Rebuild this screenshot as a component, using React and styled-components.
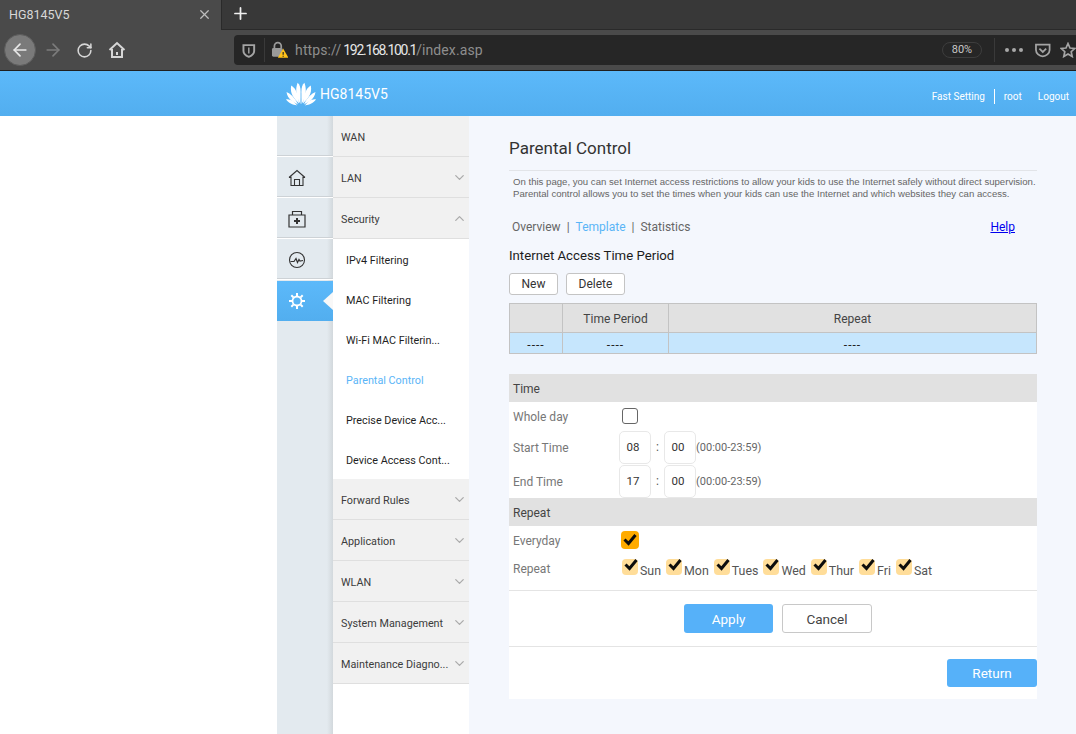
import styled, { createGlobalStyle } from "styled-components";
import { ArrowLeft, ArrowRight, ChevronDown, ChevronUp, Plus, RotateCw, X } from "lucide-react";

const FONT = 'Roboto, "Noto Sans", sans-serif';

const GlobalStyle = createGlobalStyle`
  html, body {
    margin: 0;
    padding: 0;
    background: #fff;
    overflow: hidden;
  }
  * {
    box-sizing: border-box;
  }
`;

const Page = styled.div`
  width: 1076px;
  height: 734px;
  overflow: hidden;
  font-family: ${FONT};
  display: flex;
  flex-direction: column;
`;

/* browser chrome */
const TabBar = styled.div`
  height: 30px;
  background: #383838;
  border-bottom: 1px solid #2a2a2a;
  display: flex;
  align-items: center;
  color: #fff;
`;

const Tab = styled.div`
  width: 222px;
  height: 30px;
  background: #4a4a4a;
  border-right: 1px solid #2a2a2a;
  padding: 0 9px;
  display: flex;
  align-items: center;
  justify-content: space-between;
  font-size: 12.5px;
  color: #d8d8d8;
`;

const NewTab = styled.div`
  margin: -2px 0 0 9px;
  display: flex;
`;

const NavBar = styled.div`
  height: 41px;
  background: #4a4a4a;
  border-bottom: 1px solid #1f1f1f;
  display: flex;
  align-items: center;
  padding-left: 4px;
`;

const BackCircle = styled.div`
  width: 32px;
  height: 32px;
  border-radius: 50%;
  background: #7a7a7a;
  border: 1px solid #5c5c5c;
  display: flex;
  align-items: center;
  justify-content: center;
`;

const NavIcon = styled.div`
  display: flex;
  margin-left: ${(p) => p.$left}px;
`;

const UrlBar = styled.div`
  flex: 1;
  height: 30px;
  margin-left: 108px;
  background: #262626;
  border-radius: 4px 0 0 4px;
  display: flex;
  align-items: center;
  padding-left: 8px;
  overflow: hidden;
`;

const UrlDivider = styled.div`
  width: 1px;
  height: 24px;
  background: #3a3a3a;
  margin: ${(p) => p.$margin};
`;

const UrlText = styled.div`
  margin-left: 7px;
  width: 664px;
  font-size: 14px;
  letter-spacing: 0.1px;
  color: #8e8e8e;
  white-space: nowrap;
  b {
    margin-left: 2px;
    font-weight: 400;
    letter-spacing: -1.3px;
    color: #e6e6e6;
  }
`;

const ZoomPill = styled.div`
  width: 42px;
  height: 16px;
  border: 1px solid #3d3d3d;
  border-radius: 8px;
  color: #c8c8c8;
  font-size: 11px;
  line-height: 14px;
  text-align: center;
`;

const Dots = styled.div`
  display: flex;
  gap: 3px;
  margin: 0 12px 0 10px;
  span {
    width: 4px;
    height: 4px;
    border-radius: 50%;
    background: #a8a8a8;
  }
`;

/* router header */
const Header = styled.header`
  height: 45px;
  background: linear-gradient(#5cb9fa, #52aeef);
  display: flex;
  padding-left: 286px;
  color: #fff;
`;

const Brand = styled.div`
  display: flex;
  align-items: center;
  gap: 4px;
  font-size: 14px;
  height: 45px;
`;

const HeaderLinks = styled.div`
  margin-left: auto;
  padding: 18px 7px 0 0;
  display: flex;
  align-items: flex-start;
  font-size: 10px;
  line-height: 15px;
`;

const HeaderLink = styled.span`
  margin-left: ${(p) => p.$left || 0}px;
  padding-right: ${(p) => p.$right || 0}px;
  border-right: ${(p) => (p.$bar ? "1px solid #fff" : "none")};
`;

/* page body */
const Body = styled.div`
  flex: 1;
  display: grid;
  grid-template-columns: 277px 56px 136px 1fr;
  min-height: 0;
`;

const Blank = styled.div`
  background: #fff;
`;

const IconRail = styled.nav`
  background: linear-gradient(to right, #e3eaef 0 50px, #d2d8dc 56px);
  display: flex;
  flex-direction: column;
`;

const RailItem = styled.div`
  position: relative;
  height: 41px;
  margin-bottom: ${(p) => (p.$gap ? 1 : 0)}px;
  padding: 2px 0 0 11px;
  display: flex;
  align-items: center;
  border-bottom: 1px solid #fff;
  box-shadow: inset 0 -1px 0 #cdd2d6;
  ${(p) =>
    p.$active &&
    `
    height: 40px;
    padding-top: 0;
    background: linear-gradient(#5cb9fa, #52aeef);
    box-shadow: none;
    border-bottom: none;
  `}
`;

const RailNotch = styled.div`
  position: absolute;
  right: 0;
  top: 11px;
  border-style: solid;
  border-width: 9px 10px 9px 0;
  border-color: transparent #f8f8f8 transparent transparent;
`;

const Menu = styled.nav`
  background: #fff;
  display: flex;
  flex-direction: column;
  font-size: 10.8px;
`;

const MenuItem = styled.div`
  height: 41px;
  background: #f1f1f1;
  border-bottom: 1px solid #dfdfdf;
  padding: 0 2px 0 8px;
  display: flex;
  align-items: center;
  justify-content: space-between;
  color: #3c3c3c;
  white-space: nowrap;
`;

const MenuLabel = styled.span`
  padding-top: 2px;
`;

const SubItem = styled.div`
  height: 40px;
  padding: 2px 0 0 13px;
  display: flex;
  align-items: center;
  color: ${(p) => (p.$active ? "#5ab5f7" : "#1f1f1f")};
  white-space: nowrap;
`;

const Content = styled.main`
  background: #f4f7fd;
  padding-left: 40px;
  overflow: hidden;
`;

const Column = styled.div`
  width: 528px;
`;

const Title = styled.h1`
  margin: 0;
  height: 55px;
  padding-top: 19px;
  border-bottom: 1px solid #e2e4e8;
  font-size: 17px;
  line-height: 26px;
  font-weight: 400;
  color: #333;
`;

const Description = styled.p`
  margin: 0;
  padding: 5px 0 0 4px;
  font-family: "Liberation Sans", Arial, sans-serif;
  font-size: 9.6px;
  line-height: 12px;
  color: #666;
  white-space: nowrap;
`;

const TabsRow = styled.div`
  display: flex;
  align-items: center;
  height: 20px;
  margin-top: 17px;
  padding-left: 3px;
  font-size: 12px;
  color: #666;
`;

const TabLink = styled.span`
  color: ${(p) => (p.$active ? "#5ab5f7" : "#666")};
`;

const TabBarSep = styled.span`
  margin: 0 6px;
`;

const HelpLink = styled.a`
  margin-left: auto;
  margin-right: 22px;
  color: #0000ee;
  text-decoration: underline;
  cursor: pointer;
`;

const SectionTitle = styled.h2`
  margin: 9px 0 0;
  height: 20px;
  font-size: 13.2px;
  line-height: 20px;
  font-weight: 400;
  color: #1c1c1c;
`;

const ButtonRow = styled.div`
  display: flex;
  gap: 8px;
  margin-top: 7px;
`;

const SmallButton = styled.button`
  height: 22px;
  width: ${(p) => p.$width}px;
  padding: 0;
  background: #fff;
  border: 1px solid #c4c4c4;
  border-radius: 3px;
  font-family: ${FONT};
  font-size: 12px;
  color: #333;
`;

const Table = styled.table`
  width: 528px;
  margin-top: 8px;
  border-collapse: collapse;
  table-layout: fixed;
  font-size: 12px;
  color: #444;
  th {
    height: 29px;
    padding: 2px 0 0;
    background: #e1e1e1;
    border: 1px solid #c3c3c3;
    font-weight: 400;
  }
  td {
    height: 21px;
    padding: 3px 0 0;
    background: #c6e6fd;
    border: 1px solid #c3c3c3;
    text-align: center;
    letter-spacing: 1px;
    color: #222;
  }
`;

const Card = styled.section`
  margin-top: 20px;
  background: #fff;
  font-size: 12px;
  color: #777;
`;

const Band = styled.div`
  height: 28px;
  padding: 2px 0 0 4px;
  background: #e1e1e1;
  display: flex;
  align-items: center;
  color: #444;
`;

const Row = styled.div`
  height: ${(p) => p.$height}px;
  margin-bottom: ${(p) => p.$bottom || 0}px;
  display: grid;
  grid-template-columns: 106px 1fr;
  align-items: center;
  padding-left: 4px;
`;

const RowLabel = styled.span`
  padding-top: 2px;
`;

const Controls = styled.div`
  display: flex;
  align-items: center;
`;

const TimeInput = styled.input`
  width: 32px;
  height: 33px;
  padding: 0 4px 0 0;
  background: #fff;
  border: 1px solid #e8e8e8;
  border-radius: 5px;
  outline: none;
  text-align: center;
  font-family: ${FONT};
  font-size: 11.5px;
  color: #333;
`;

const Colon = styled.span`
  width: 13px;
  text-align: center;
  color: #555;
`;

const Hint = styled.span`
  font-size: 11px;
  color: #666;
`;

const EmptyCheck = styled.span`
  display: block;
  width: 16px;
  height: 16px;
  margin-left: 3px;
  border: 1px solid #666;
  border-radius: 3px;
  background: #fff;
`;

const CheckBox = styled.span`
  position: relative;
  display: block;
  flex: none;
  width: ${(p) => (p.$strong ? 18 : 16)}px;
  height: ${(p) => (p.$strong ? 18 : 16)}px;
  margin-left: ${(p) => (p.$strong ? 2 : 0)}px;
  border-radius: 4px;
  background: ${(p) => (p.$strong ? "#ffab00" : "#ffdd99")};
  svg {
    position: absolute;
    left: 2px;
    top: ${(p) => (p.$strong ? 2 : -1)}px;
  }
`;

const DayList = styled.div`
  display: flex;
  margin-left: 3px;
  gap: 5px;
  padding-top: 1px;
`;

const Day = styled.div`
  display: flex;
  gap: 2px;
  align-items: flex-start;
  color: #555;
  font-size: 12.4px;
  line-height: 16px;
`;

const DayName = styled.span`
  padding-top: 4px;
`;

const ActionRow = styled.div`
  height: ${(p) => p.$height}px;
  display: flex;
  align-items: center;
  gap: 9px;
  padding-left: ${(p) => p.$left || 0}px;
  justify-content: ${(p) => (p.$end ? "flex-end" : "flex-start")};
  border-top: ${(p) => (p.$line ? "1px solid #e4e4e4" : "none")};
`;

const PrimaryButton = styled.button`
  width: ${(p) => p.$width}px;
  height: ${(p) => p.$tall}px;
  padding: 0;
  border: none;
  border-radius: 3px;
  background: #56b1f9;
  color: #fff;
  font-family: ${FONT};
  font-size: 13.5px;
`;

const CancelButton = styled.button`
  width: 90px;
  height: 29px;
  padding: 0;
  background: #fff;
  border: 1px solid #c8c8c8;
  border-radius: 3px;
  color: #444;
  font-family: ${FONT};
  font-size: 13.5px;
`;

const HuaweiLogo = () => {
  const petals = (
    <>
      <path d="M14.400 22C10.500 16 8.800 8 11.600.8c2 1.400 3 4.700 3 9 0 4.500-.1 8.700-.2 12.200z" />
      <path d="M13 21.500C8.500 17 3.500 12 5.200 3.500 8 5 10 8 11.300 12c1 3.200 1.500 6.500 1.700 9.500z" />
      <path d="M12 22.500C7.500 20 1.500 17.500.5 10c3.800 1.500 8 5 11.500 12.500z" />
      <path d="M11 23.500C6.500 22.500 2.500 21.500 0 17.300c4-.6 8 1.500 11 6.200z" />
    </>
  );
  return (
    <svg width="30" height="24" viewBox="0 0 30 24" fill="#fff">
      {petals}
      <g transform="matrix(-1 0 0 1 30 0)">{petals}</g>
    </svg>
  );
};

const HomeBrowserIcon = () => (
  <svg width="18" height="18" viewBox="0 0 18 18" fill="none" stroke="#d6d6d6" strokeWidth="2">
    <path d="M1.500 9 9 2l7.500 7" />
    <path d="M4 8v8h10V8" />
    <rect x="8" y="11" width="2" height="3" fill="#d6d6d6" stroke="none" />
  </svg>
);

const ShieldIcon = () => (
  <svg width="14" height="15" viewBox="0 0 14 15" fill="none" stroke="#a4a4a4" strokeWidth="2">
    <path d="M1.500 2h11v6c0 3-3 5-5.500 6C4.500 13 1.500 11 1.500 8z" />
    <path d="M7 4.500v6" strokeWidth="1.500" />
  </svg>
);

const LockWarnIcon = () => (
  <svg width="18" height="18" viewBox="0 0 18 18">
    <path d="M3.500 7V5a3.500 3.500 0 0 1 7 0v2" fill="none" stroke="#9a9a9a" strokeWidth="1.800" />
    <rect x="1" y="7" width="11" height="9" rx="1.500" fill="#9a9a9a" />
    <path d="M12.500 7.500 18 17H7z" fill="#ffc21a" />
    <path d="M12.500 11v3M12.500 15v1" stroke="#222" strokeWidth="1.200" />
  </svg>
);

const PocketIcon = () => (
  <svg width="16" height="15" viewBox="0 0 16 15" fill="none" stroke="#a4a4a4" strokeWidth="1.800">
    <path d="M1 1.500h14V7c0 3.500-3.500 6.500-7 6.500S1 10.500 1 7z" />
    <path d="M4.500 5.500 8 9l3.500-3.500" />
  </svg>
);

const StarIcon = () => (
  <svg width="16" height="16" viewBox="0 0 16 16" fill="none" stroke="#a4a4a4" strokeWidth="1.700">
    <path d="M8 1.500l2 4.500 4.800.5-3.600 3.200 1 4.800L8 12l-4.200 2.500 1-4.800L1.200 6.500 6 6z" />
  </svg>
);

const RailHome = () => (
  <svg width="18" height="18" viewBox="0 0 18 18" fill="none" stroke="#333" strokeWidth="1.100">
    <path d="M1 8.500 9 1.500l8 7" />
    <path d="M3 7.500v9h12v-9" />
    <path d="M6.500 16.500v-6h5v6" />
    <path d="M1 8.500h2M15 8.500h2" />
  </svg>
);

const RailCase = () => (
  <svg width="18" height="18" viewBox="0 0 18 18" fill="none" stroke="#333" strokeWidth="1.200">
    <path d="M1 5h16v12H1z" />
    <path d="M4.500 5V1.500h9V5" />
    <path d="M9 8v6M6 11h6" strokeWidth="2" />
  </svg>
);

const RailPulse = () => (
  <svg width="18" height="18" viewBox="0 0 18 18" fill="none" stroke="#333" strokeWidth="1.100">
    <circle cx="9" cy="9" r="7.500" />
    <path d="M2.500 10.500H6l2-3 1.500 4 1.500-3 1 1.500 3-.5" strokeWidth="1.200" />
  </svg>
);

const RailGear = () => (
  <svg width="18" height="18" viewBox="0 0 18 18" fill="none" stroke="#fff" strokeWidth="1.800">
    <circle cx="9" cy="9" r="4.500" />
    <path d="M9 1v3M9 14v3M1 9h3M14 9h3M3.300 3.300l2.100 2.100M12.600 12.600l2.100 2.100M3.300 14.700l2.100-2.100M12.600 5.400l2.100-2.100" strokeWidth="2" />
  </svg>
);

const Tick = () => (
  <svg width="14" height="13" viewBox="0 0 14 13" fill="none" stroke="#0d0d0d" strokeWidth="3">
    <path d="M1.500 6.500 5.500 10.500 12.500 2" />
  </svg>
);

const menuTop = [
  { name: "WAN" },
  { name: "LAN", chevron: "down" },
  { name: "Security", chevron: "up" },
];

const subItems = [
  "IPv4 Filtering",
  "MAC Filtering",
  "Wi-Fi MAC Filterin...",
  "Parental Control",
  "Precise Device Acc...",
  "Device Access Cont...",
];

const menuBottom = ["Forward Rules", "Application", "WLAN", "System Management", "Maintenance Diagno..."];

const days = ["Sun", "Mon", "Tues", "Wed", "Thur", "Fri", "Sat"];

const MenuRow = ({ name, chevron }) => (
  <MenuItem>
    <MenuLabel>{name}</MenuLabel>
    {chevron === "down" && <ChevronDown size={15} color="#aaa" strokeWidth={2} />}
    {chevron === "up" && <ChevronUp size={15} color="#aaa" strokeWidth={2} />}
  </MenuItem>
);

const App = () => {
  return (
    <Page>
      <GlobalStyle />
      <TabBar>
        <Tab>
          <span>HG8145V5</span>
          <X size={15} color="#bdbdbd" strokeWidth={2} />
        </Tab>
        <NewTab>
          <Plus size={19} color="#f0f0f0" strokeWidth={2.2} />
        </NewTab>
      </TabBar>
      <NavBar>
        <BackCircle>
          <ArrowLeft size={20} color="#e8e8e8" strokeWidth={2} />
        </BackCircle>
        <NavIcon $left={7}>
          <ArrowRight size={20} color="#7c7c7c" strokeWidth={2} />
        </NavIcon>
        <NavIcon $left={13}>
          <RotateCw size={17} color="#d6d6d6" strokeWidth={2.2} />
        </NavIcon>
        <NavIcon $left={15}>
          <HomeBrowserIcon />
        </NavIcon>
        <UrlBar>
          <ShieldIcon />
          <UrlDivider $margin="0 6px 0 8px" />
          <LockWarnIcon />
          <UrlText>
            https://<b>192.168.100.1</b>/index.asp
          </UrlText>
          <ZoomPill>80%</ZoomPill>
          <UrlDivider $margin="0 0 0 12px" />
          <Dots>
            <span />
            <span />
            <span />
          </Dots>
          <PocketIcon />
          <NavIcon $left={9}>
            <StarIcon />
          </NavIcon>
        </UrlBar>
      </NavBar>
      <Header>
        <Brand>
          <HuaweiLogo />
          <span>HG8145V5</span>
        </Brand>
        <HeaderLinks>
          <HeaderLink $bar $right={9}>Fast Setting</HeaderLink>
          <HeaderLink $left={9}>root</HeaderLink>
          <HeaderLink $left={16}>Logout</HeaderLink>
        </HeaderLinks>
      </Header>
      <Body>
        <Blank />
        <IconRail>
          <RailItem />
          <RailItem>
            <RailHome />
          </RailItem>
          <RailItem>
            <RailCase />
          </RailItem>
          <RailItem $gap>
            <RailPulse />
          </RailItem>
          <RailItem $active>
            <RailGear />
            <RailNotch />
          </RailItem>
        </IconRail>
        <Menu>
          {menuTop.map((item) => (
            <MenuRow key={item.name} name={item.name} chevron={item.chevron} />
          ))}
          <div>
            {subItems.map((name) => (
              <SubItem key={name} $active={name === "Parental Control"}>
                {name}
              </SubItem>
            ))}
          </div>
          {menuBottom.map((name) => (
            <MenuRow key={name} name={name} chevron="down" />
          ))}
        </Menu>
        <Content>
          <Column>
            <Title>Parental Control</Title>
            <Description>
              On this page, you can set Internet access restrictions to allow your kids to use the Internet safely without direct supervision.
              <br />
              Parental control allows you to set the times when your kids can use the Internet and which websites they can access.
            </Description>
            <TabsRow>
              <TabLink>Overview</TabLink>
              <TabBarSep>|</TabBarSep>
              <TabLink $active>Template</TabLink>
              <TabBarSep>|</TabBarSep>
              <TabLink>Statistics</TabLink>
              <HelpLink>Help</HelpLink>
            </TabsRow>
            <SectionTitle>Internet Access Time Period</SectionTitle>
            <ButtonRow>
              <SmallButton $width={49}>New</SmallButton>
              <SmallButton $width={59}>Delete</SmallButton>
            </ButtonRow>
            <Table>
              <colgroup>
                <col width="53" />
                <col width="106" />
                <col />
              </colgroup>
              <thead>
                <tr>
                  <th />
                  <th>Time Period</th>
                  <th>Repeat</th>
                </tr>
              </thead>
              <tbody>
                <tr>
                  <td>----</td>
                  <td>----</td>
                  <td>----</td>
                </tr>
              </tbody>
            </Table>
            <Card>
              <Band>Time</Band>
              <Row $height={28}>
                <RowLabel>Whole day</RowLabel>
                <Controls>
                  <EmptyCheck />
                </Controls>
              </Row>
              <Row $height={34}>
                <RowLabel>Start Time</RowLabel>
                <Controls>
                  <TimeInput readOnly value="08" />
                  <Colon>:</Colon>
                  <TimeInput readOnly value="00" />
                  <Hint>(00:00-23:59)</Hint>
                </Controls>
              </Row>
              <Row $height={34}>
                <RowLabel>End Time</RowLabel>
                <Controls>
                  <TimeInput readOnly value="17" />
                  <Colon>:</Colon>
                  <TimeInput readOnly value="00" />
                  <Hint>(00:00-23:59)</Hint>
                </Controls>
              </Row>
              <Band>Repeat</Band>
              <Row $height={28}>
                <RowLabel>Everyday</RowLabel>
                <Controls>
                  <CheckBox $strong>
                    <Tick />
                  </CheckBox>
                </Controls>
              </Row>
              <Row $height={28} $bottom={8}>
                <RowLabel>Repeat</RowLabel>
                <DayList>
                  {days.map((day) => (
                    <Day key={day}>
                      <CheckBox>
                        <Tick />
                      </CheckBox>
                      <DayName>{day}</DayName>
                    </Day>
                  ))}
                </DayList>
              </Row>
              <ActionRow $height={56} $line $left={175}>
                <PrimaryButton $width={89} $tall={29}>Apply</PrimaryButton>
                <CancelButton>Cancel</CancelButton>
              </ActionRow>
              <ActionRow $height={53} $line $end>
                <PrimaryButton $width={90} $tall={28}>Return</PrimaryButton>
              </ActionRow>
            </Card>
          </Column>
        </Content>
      </Body>
    </Page>
  );
};

export default App;
